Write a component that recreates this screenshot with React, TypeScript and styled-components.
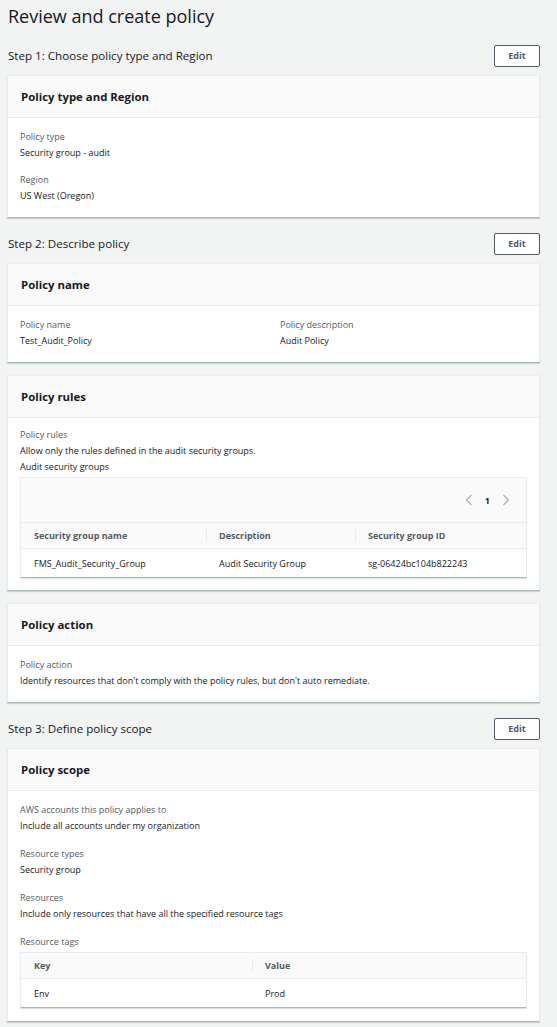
import styled, { createGlobalStyle } from "styled-components";

const GlobalStyle = createGlobalStyle`
  body {
    margin: 0;
    background: #f2f3f3;
    font-family: "Open Sans", "Noto Sans", sans-serif;
    color: #16191f;
  }
`;

type Field = { label: string; value: string };

const ChevronLeft = () => (
  <svg width="8" height="12" viewBox="0 0 8 12">
    <path d="M6.5 1 L1.5 6 L6.5 11" fill="none" stroke="#aab7b8" strokeWidth="1.4" />
  </svg>
);

const ChevronRight = () => (
  <svg width="8" height="12" viewBox="0 0 8 12">
    <path d="M1.5 1 L6.5 6 L1.5 11" fill="none" stroke="#aab7b8" strokeWidth="1.4" />
  </svg>
);

export default function App() {
  return (
    <>
      <GlobalStyle />
      <Page>
        <PageTitle>Review and create policy</PageTitle>

        <StepRow>
          <StepTitle>Step 1: Choose policy type and Region</StepTitle>
          <EditButton>Edit</EditButton>
        </StepRow>
        <Card>
          <CardHeader>Policy type and Region</CardHeader>
          <CardBody>
            <FieldStack
              fields={[
                { label: "Policy type", value: "Security group - audit" },
                { label: "Region", value: "US West (Oregon)" },
              ]}
            />
          </CardBody>
        </Card>

        <StepRow>
          <StepTitle>Step 2: Describe policy</StepTitle>
          <EditButton>Edit</EditButton>
        </StepRow>
        <Card>
          <CardHeader>Policy name</CardHeader>
          <CardBody>
            <TwoColumns>
              <FieldBlock>
                <Label>Policy name</Label>
                <Value>Test_Audit_Policy</Value>
              </FieldBlock>
              <FieldBlock>
                <Label>Policy description</Label>
                <Value>Audit Policy</Value>
              </FieldBlock>
            </TwoColumns>
          </CardBody>
        </Card>

        <Card $spaced>
          <CardHeader>Policy rules</CardHeader>
          <CardBody $tight>
            <Label>Policy rules</Label>
            <Value>Allow only the rules defined in the audit security groups.</Value>
            <Value>Audit security groups</Value>
            <TableBox>
              <Pager>
                <ChevronLeft />
                <PageNumber>1</PageNumber>
                <ChevronRight />
              </Pager>
              <Table $cols="185px 149px 1fr">
                <HeadCell>Security group name</HeadCell>
                <HeadCell $divider>Description</HeadCell>
                <HeadCell $divider>Security group ID</HeadCell>
                <Cell>FMS_Audit_Security_Group</Cell>
                <Cell>Audit Security Group</Cell>
                <Cell>sg-06424bc104b822243</Cell>
              </Table>
            </TableBox>
          </CardBody>
        </Card>

        <Card $spaced>
          <CardHeader>Policy action</CardHeader>
          <CardBody>
            <Label>Policy action</Label>
            <Value>
              Identify resources that don't comply with the policy rules, but don't auto remediate.
            </Value>
          </CardBody>
        </Card>

        <StepRow>
          <StepTitle>Step 3: Define policy scope</StepTitle>
          <EditButton>Edit</EditButton>
        </StepRow>
        <Card>
          <CardHeader>Policy scope</CardHeader>
          <CardBody>
            <FieldStack
              $gap={12}
              fields={[
                { label: "AWS accounts this policy applies to", value: "Include all accounts under my organization" },
                { label: "Resource types", value: "Security group" },
                { label: "Resources", value: "Include only resources that have all the specified resource tags" },
              ]}
            />
            <Label $top>Resource tags</Label>
            <TableBox>
              <Table $cols="231px 1fr">
                <HeadCell $shaded>Key</HeadCell>
                <HeadCell $shaded $divider>Value</HeadCell>
                <Cell>Env</Cell>
                <Cell>Prod</Cell>
              </Table>
            </TableBox>
          </CardBody>
        </Card>
      </Page>
    </>
  );
}

function FieldStack({ fields, $gap = 11 }: { fields: Field[]; $gap?: number }) {
  return (
    <Stack $gap={$gap}>
      {fields.map((f) => (
        <FieldBlock key={f.label}>
          <Label>{f.label}</Label>
          <Value>{f.value}</Value>
        </FieldBlock>
      ))}
    </Stack>
  );
}

const Page = styled.div`
  width: 533px;
  padding: 0 17px 9px 7px;
  display: flex;
  flex-direction: column;
`;

const PageTitle = styled.h1`
  margin: 2px 0 0 1px;
  font-size: 18px;
  font-weight: 400;
  line-height: 28px;
  color: #16191f;
`;

const StepRow = styled.div`
  display: flex;
  justify-content: space-between;
  align-items: center;
  padding: 0 0 0 1px;
  height: 21px;
  margin: 15px 0 9px;
`;

const StepTitle = styled.h2`
  margin: 0;
  font-size: 11.6px;
  font-weight: 400;
  color: #16191f;
`;

const EditButton = styled.button`
  width: 46px;
  height: 22px;
  background: #ffffff;
  border: 1px solid #545b64;
  border-radius: 2px;
  font-family: inherit;
  font-size: 9px;
  font-weight: 700;
  color: #545b64;
  padding: 0;
`;

const Card = styled.section<{ $spaced?: boolean }>`
  background: #ffffff;
  border: 1px solid #eaeded;
  border-bottom-color: #aab7b8;
  box-shadow: 0 1px 1px rgba(0, 28, 36, 0.15);
  margin-top: ${(p) => (p.$spaced ? "12px" : "0")};
`;

const CardHeader = styled.h3`
  margin: 0;
  height: 41px;
  display: flex;
  align-items: center;
  padding: 0 13px;
  background: #fafafa;
  border-bottom: 1px solid #eaeded;
  font-size: 11.4px;
  font-weight: 700;
  color: #16191f;
`;

const CardBody = styled.div<{ $tight?: boolean }>`
  padding: ${(p) => (p.$tight ? "9px 12px 12px" : "11px 12px 13px")};
  display: flex;
  flex-direction: column;
`;

const Stack = styled.div<{ $gap: number }>`
  display: flex;
  flex-direction: column;
  gap: ${(p) => p.$gap}px;
`;

const TwoColumns = styled.div`
  display: grid;
  grid-template-columns: 260px 1fr;
`;

const FieldBlock = styled.div`
  display: flex;
  flex-direction: column;
`;

const Label = styled.div<{ $top?: boolean }>`
  font-size: 9px;
  line-height: 16px;
  color: #545b64;
  margin-top: ${(p) => (p.$top ? "12px" : "0")};
`;

const Value = styled.div`
  font-size: 9px;
  line-height: 16px;
  color: #16191f;
`;

const TableBox = styled.div`
  margin-top: 2px;
  border: 1px solid #eaeded;
  border-bottom-color: #aab7b8;
  box-shadow: 0 1px 1px rgba(0, 28, 36, 0.12);
  background: #ffffff;
`;

const Pager = styled.div`
  height: 44px;
  display: flex;
  align-items: center;
  justify-content: flex-end;
  gap: 12px;
  padding-right: 16px;
  background: #fafafa;
`;

const PageNumber = styled.span`
  font-size: 9px;
  font-weight: 700;
  color: #16191f;
`;

const Table = styled.div<{ $cols: string }>`
  display: grid;
  grid-template-columns: ${(p) => p.$cols};
`;

const HeadCell = styled.div<{ $divider?: boolean; $shaded?: boolean }>`
  position: relative;
  height: 25px;
  display: flex;
  align-items: center;
  padding-left: 13px;
  background: #fafafa;
  border-top: ${(p) => (p.$shaded ? "none" : "1px solid #eaeded")};
  border-bottom: 1px solid #eaeded;
  font-size: 9px;
  font-weight: 700;
  color: #545b64;

  &::before {
    content: "";
    display: ${(p) => (p.$divider ? "block" : "none")};
    position: absolute;
    left: 0;
    top: 6px;
    bottom: 6px;
    width: 1px;
    background: #eaeded;
  }
`;

const Cell = styled.div`
  height: 28px;
  display: flex;
  align-items: center;
  padding-left: 13px;
  font-size: 9px;
  color: #16191f;
`;
